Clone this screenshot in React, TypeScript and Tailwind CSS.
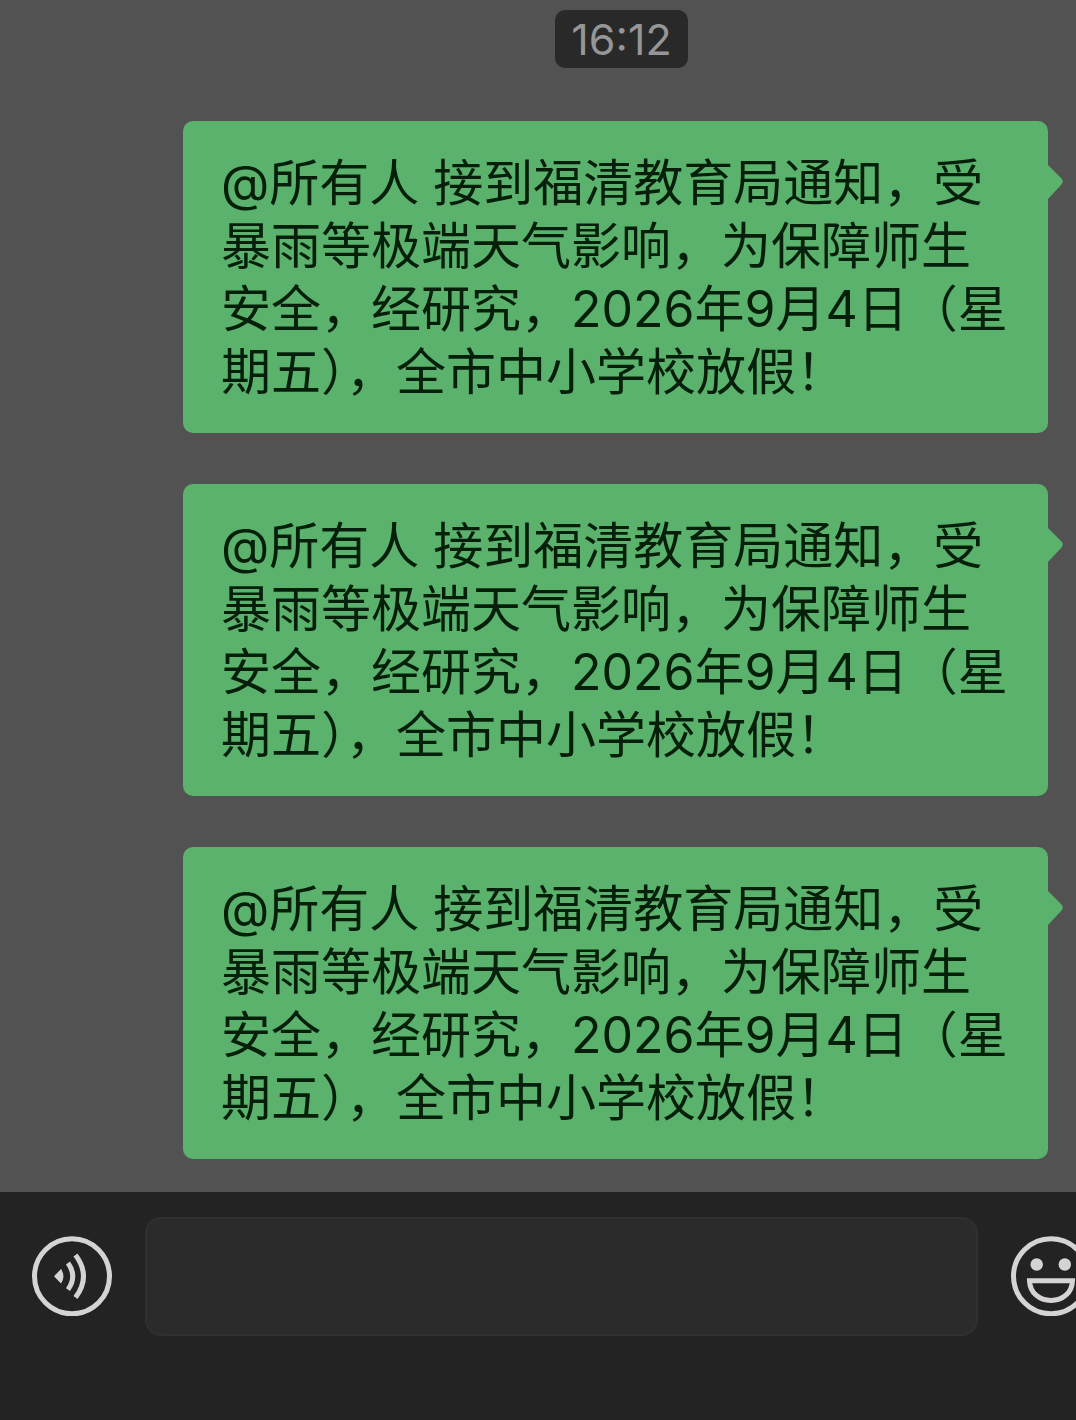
const notice = [
  "@所有人 接到福清教育局通知，受",
  "暴雨等极端天气影响，为保障师生",
  "安全，经研究，2026年9月4日（星",
  "期五），全市中小学校放假！",
].join("\n");

const messages = [
  { id: 1, text: notice },
  { id: 2, text: notice },
  { id: 3, text: notice },
];

function MessageBubble({ text }: { text: string }) {
  return (
    <div className="relative rounded-[10px] bg-[#5ab26c] pt-[31px] pb-[29px] pl-[38px]">
      <p className="whitespace-pre text-[50px] leading-[63px] text-[#051f0a]">
        {text}
      </p>
      <svg
        className="absolute top-11 left-full"
        width="16"
        height="34"
        viewBox="0 0 16 34"
        fill="#5ab26c"
      >
        <path d="M-1 -1 L0 0 L13.5 13.5 Q16 16.5 13.5 19.5 L0 34 L-1 34Z" />
      </svg>
    </div>
  );
}

function VoiceIcon() {
  return (
    <svg width="80" height="80" viewBox="0 0 80 80" fill="none">
      <circle cx="40" cy="40.3" r="37.5" stroke="#d6d3d3" strokeWidth="5" />
      <path d="M22 40.3 L29 33 Q34 40.3 29 47.6Z" fill="#d6d3d3" />
      <path
        d="M36 27 Q45.5 40.3 36 53.6 M43.5 19 Q59.5 40.3 43.5 61.6"
        stroke="#d6d3d3"
        strokeWidth="5"
      />
    </svg>
  );
}

function EmojiIcon() {
  return (
    <svg
      className="shrink-0"
      width="80"
      height="80"
      viewBox="0 0 80 80"
      fill="none"
    >
      <circle cx="40" cy="40.3" r="37.5" stroke="#d6d3d3" strokeWidth="5" />
      <circle cx="25.7" cy="28.5" r="6.2" fill="#d6d3d3" />
      <circle cx="53.8" cy="28.5" r="6.2" fill="#d6d3d3" />
      <path
        d="M18.5 44.8 H61.5 C61 57 51.5 64.5 40 64.5 C28.5 64.5 19 57 18.5 44.8Z"
        stroke="#d6d3d3"
        strokeWidth="5"
      />
    </svg>
  );
}

export default function App() {
  return (
    <div className="flex min-h-screen flex-col overflow-hidden bg-[#525252] font-['Inter','Noto_Sans_CJK_SC',sans-serif]">
      <main
        lang="zh-CN"
        className="flex flex-1 flex-col pt-[10px] pb-[33px] pl-[167px]"
      >
        <time className="mb-[53px] self-center rounded-[10px] bg-[#292929] px-4 text-[43px] leading-[58px] text-[#969696]">
          16:12
        </time>
        <div className="flex flex-col gap-[51px] pr-7 pl-4">
          {messages.map((message) => (
            <MessageBubble key={message.id} text={message.text} />
          ))}
        </div>
      </main>

      <footer className="flex items-start gap-[33px] bg-[#242323] pt-[25px] pb-[84px] pl-8">
        <button type="button" aria-label="语音" className="mt-[19px] shrink-0">
          <VoiceIcon />
        </button>
        <input
          type="text"
          aria-label="消息"
          className="h-[119px] min-w-0 flex-1 rounded-2xl border-2 border-[#303030] bg-[#2b2b2b] px-6 text-[50px] text-[#d6d3d3] outline-none"
        />
        <button
          type="button"
          aria-label="表情"
          className="mt-[19px] flex w-[65px] shrink-0 overflow-hidden"
        >
          <EmojiIcon />
        </button>
      </footer>
    </div>
  );
}
